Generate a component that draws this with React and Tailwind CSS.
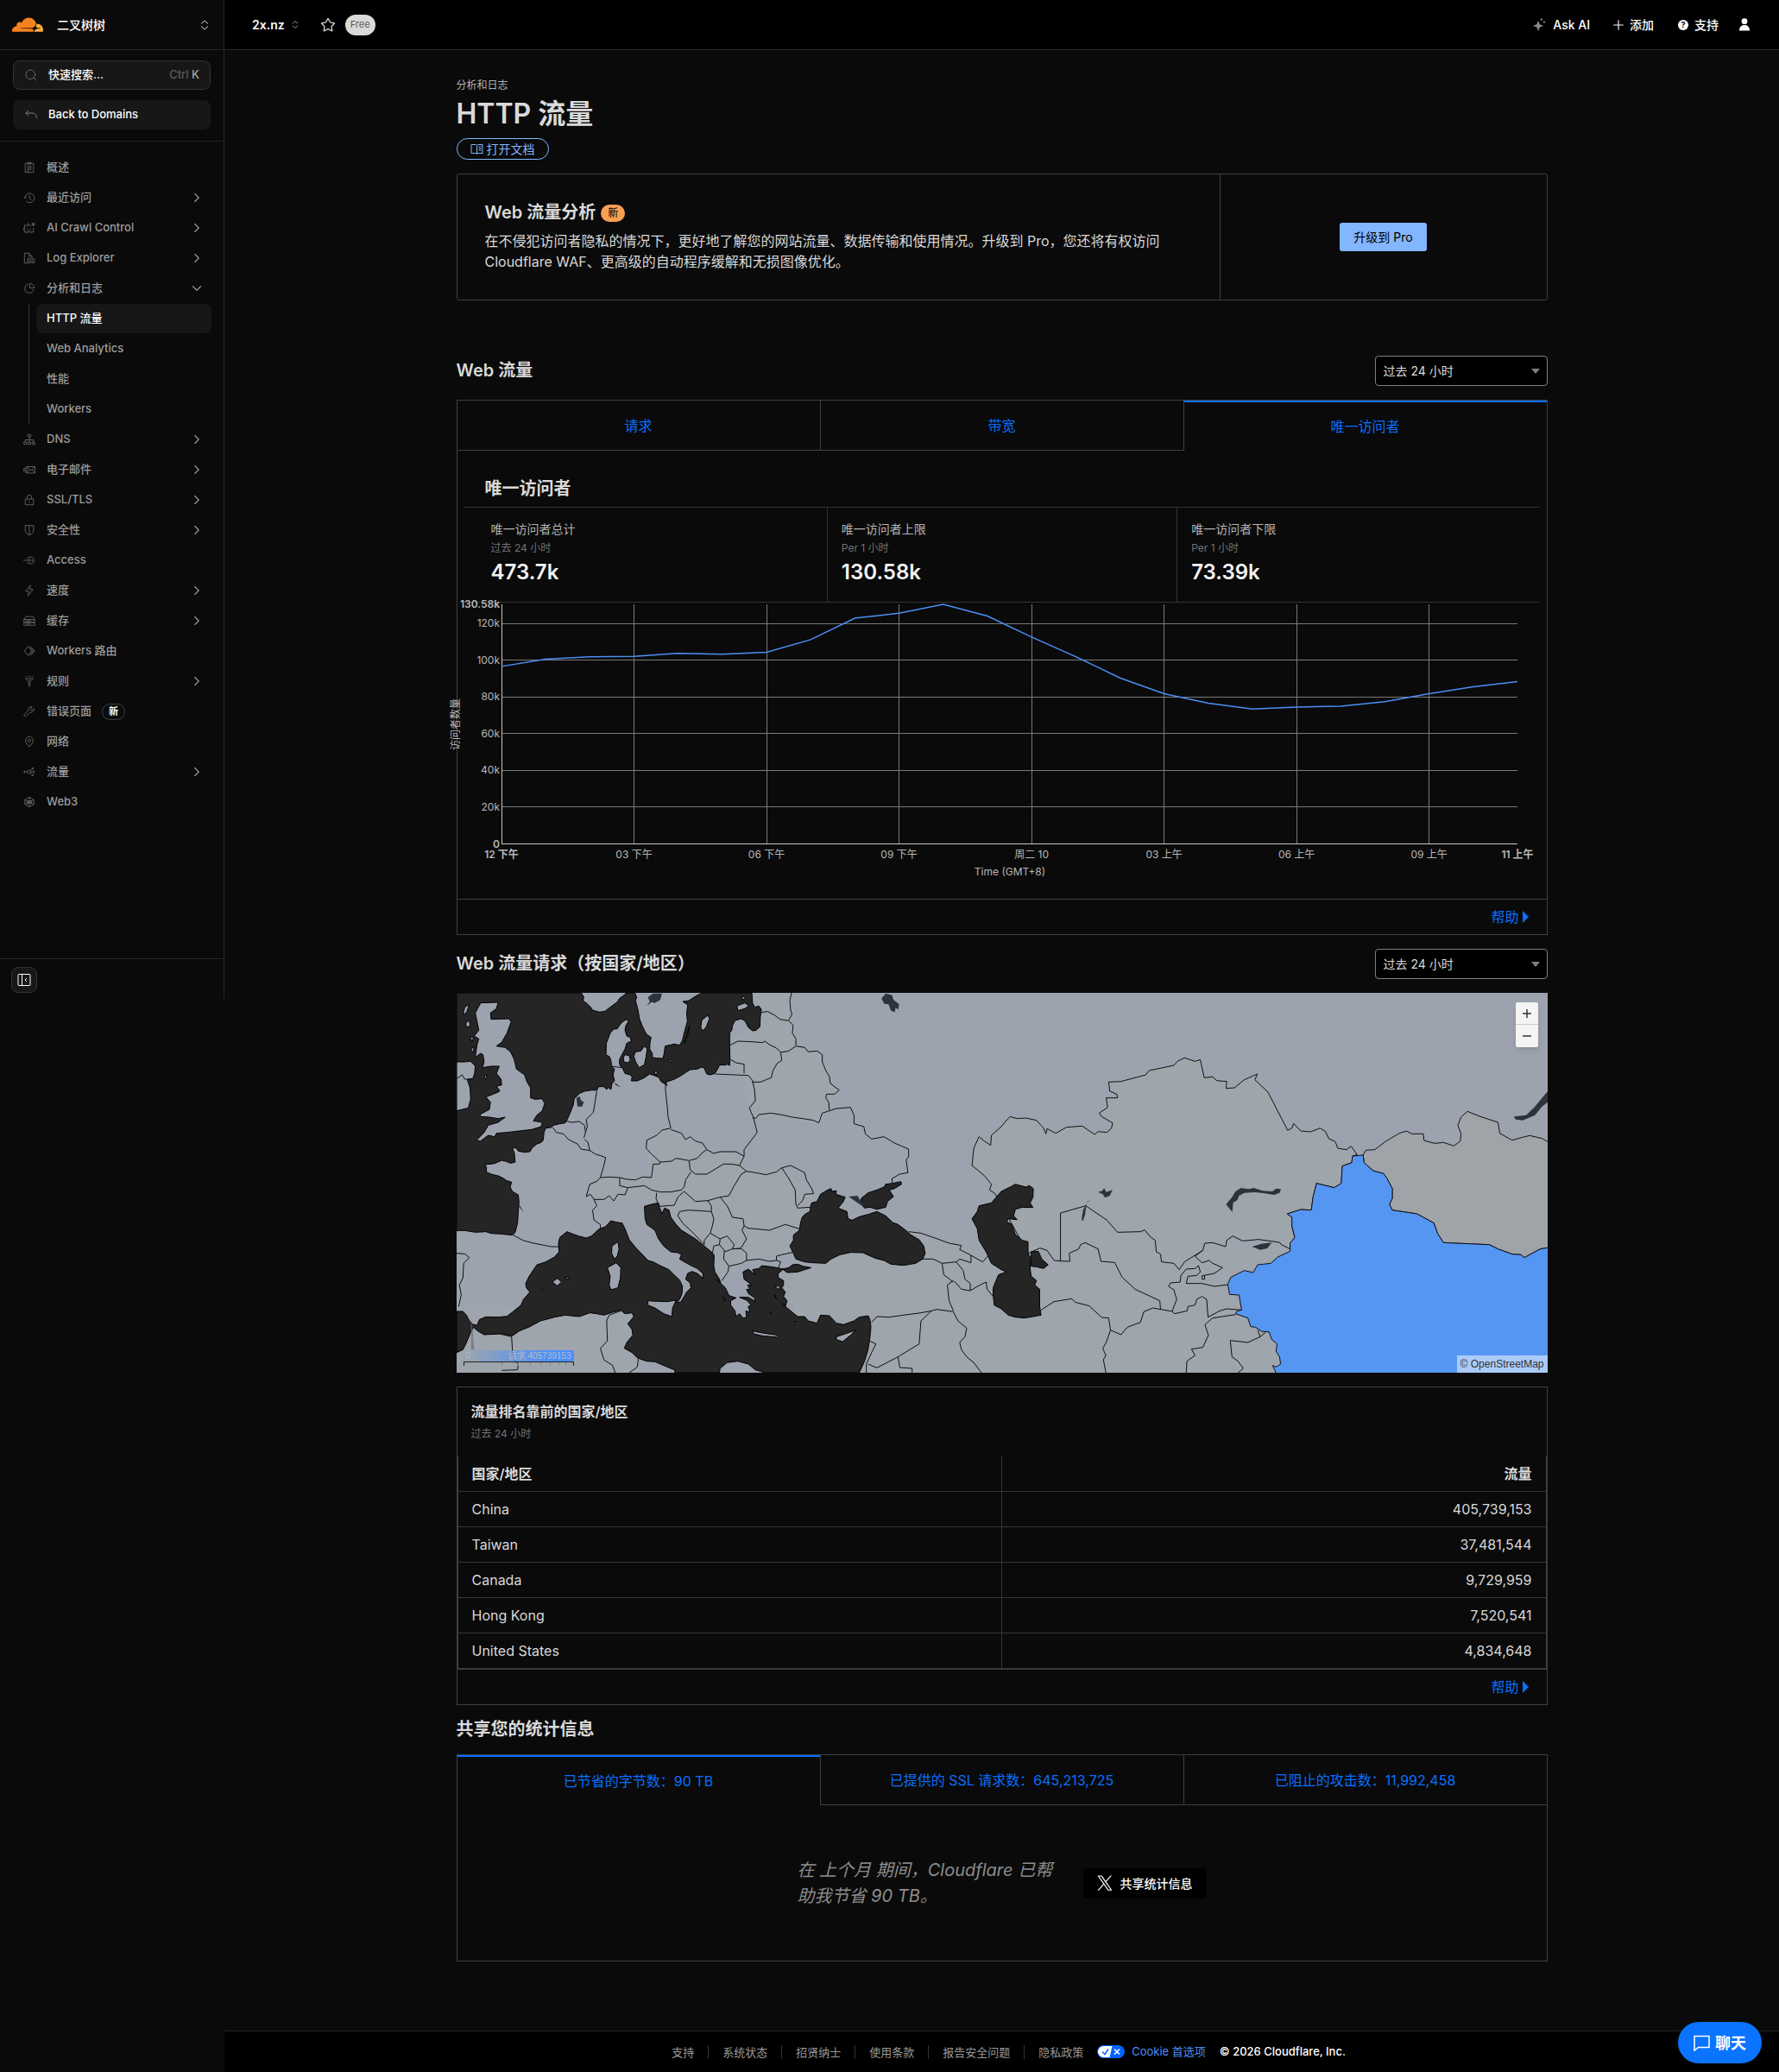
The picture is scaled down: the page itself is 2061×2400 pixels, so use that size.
import { useState } from 'react';
import { ChevronDown, ChevronRight, Plus, Search, Star } from 'lucide-react';

/* ---------- ICONS ---------- */

const ICONS = {
  overview: (
    <>
      <path d="M2.5 2.5h11v12h-11zM5.5 1.5h5v2h-5z" />
      <path d="M5 6.5h6M5 8.5h6M5 10.5h6M5 12.5h3" />
    </>
  ),
  recent: (
    <>
      <path d="M2.2 8.5a6.2 6.2 0 1 1 1.6 4M.8 7l1.4 1.8L4 7.2" />
      <path d="M8.2 4.5V9l2.6 1.6" />
    </>
  ),
  robot: (
    <>
      <path d="M10 4.5H1.5v9h12V8M4.5 13.5v1M10.5 13.5v1M6.5 4.5v-3M.5 8v3" />
      <path d="M5 7.5v1M9.5 7.5v1M5 10.5c1.2 1 3.6 1 4.8 0" />
      <path d="M13.2.8v5M10.8 3.3h4.8M11.6 1.6l3.2 3.4M14.8 1.6 11.6 5" />
    </>
  ),
  log: (
    <>
      <path d="M5 14.5H1.5v-13h6l4 4v2M7.5 1.5v4h4" />
      <path d="M5.5 10a1.8 1.8 0 0 1 3.4-1 1.8 1.8 0 0 1 3 0 1.8 1.8 0 0 1 3 1.6v2.9a1.2 1.2 0 0 1-2.4 0h-4a1.5 1.5 0 0 1-3 0z" />
      <path d="M7.5 9.5v4M10 9.5v4M12.5 9.5v4" />
    </>
  ),
  pie: (
    <>
      <path d="M6.8 2.6A5.8 5.8 0 1 0 13.6 9.5" />
      <path d="M8.5 1.5v6h6a6 6 0 0 0-6-6z" />
    </>
  ),
  dns: (
    <>
      <path d="M6 1.5h4v3H6zM.8 11.5h3.6v3H.8zM6.2 11.5h3.6v3H6.2zM11.6 11.5h3.6v3h-3.6z" />
      <path d="M8 4.5v7M2.6 11.5v-3h10.8v3" />
    </>
  ),
  mail: (
    <>
      <path d="M4.5 4h11v8.5h-11zM4.5 4l5.5 5 5.5-5M4.5 12.5 8.5 8M15.5 12.5 11.5 8" />
      <path d="M2.5 4.5V12M.8 6v4.5" />
    </>
  ),
  lock: (
    <>
      <path d="M2.5 7h11v7.5h-11zM5 7V4.5a3 3 0 0 1 6 0V7" />
      <path d="M8 9.8v2" />
    </>
  ),
  shield: <path d="M2.5 2h11v6c0 3.5-2.5 5.5-5.5 6.5C5 13.5 2.5 11.5 2.5 8zM8 2v12.5" />,
  access: (
    <>
      <path d="M4.5 5.6a5.5 4.5 0 1 1 0 5" />
      <path d="M0 8h9.5M7 5.8 9.8 8 7 10.2M11.5 6.5a2.2 2.2 0 0 1 0 3.2" />
    </>
  ),
  bolt: <path d="M9.5 1 3 9h4.5L6 15l7-8.5H8.500z" />,
  cache: (
    <>
      <path d="M.8 6.5 3 2.5h10l2.200 4zM.8 6.500h14.400v3.500H.8zM.8 10.500h14.400v3.500H.8z" />
      <path d="M3.500 8.500h6M3.500 12.500h6" />
    </>
  ),
  workers: (
    <>
      <path d="M6.5 2 1.5 8l5 6L11 8z" />
      <path d="M8.5 2 13 8l-4.5 6M10.8 3l4 5-4 5" />
    </>
  ),
  rules: (
    <>
      <path d="M3 4.5h10L9 8.8v4.7H7V8.8z" />
      <path d="M2.5 2H4M6 2h1.500M9 2h1.500M12 2h1.500M8 14.500V16M8 6v2" />
    </>
  ),
  wrench: (
    <path d="M14 4.2 11.600 6.500 9.700 6 9.300 4.200 11.600 2a4 4 0 0 0-5.200 4.800L1.500 11.500a1.700 1.700 0 0 0 0 2.500 1.700 1.700 0 0 0 2.500 0l5-4.800a4 4 0 0 0 5-5z" />
  ),
  pin: (
    <>
      <path d="M8 15C5 11.500 3 9 3 6.500a5 5 0 0 1 10 0C13 9 11 11.500 8 15z" />
      <circle cx="8" cy="6.500" r="1.800" />
    </>
  ),
  traffic: (
    <>
      <circle cx="7.500" cy="8" r="2.300" />
      <path d="M0 8h5.200M9.800 8H15M13 6.200 15.200 8 13 9.800M9.200 6.400 13 3M10.800 2.800H13V5M9.200 9.600 13 13M10.800 13.200H13V11M1.800 6.500v3" />
    </>
  ),
  web3: (
    <>
      <path d="M8 1.500 14 5v6l-6 3.500L2 11V5z" />
      <path d="M2 5l12 6M14 5 2 11M8 1.500v13M5 6.500h6v3.500H5z" />
    </>
  ),
};

function NavIcon({ name }) {
  return (
    <svg className="h-[14px] w-[14px] shrink-0 text-[#686868]" viewBox="0 0 16 16" fill="none" stroke="currentColor">
      {ICONS[name]}
    </svg>
  );
}

function UpDown({ className }) {
  return (
    <svg className={className} viewBox="0 0 10 12" fill="none" stroke="currentColor">
      <path d="M1 4.500 5 1l4 3.500M1 7.500 5 11l4-3.500" />
    </svg>
  );
}

function CloudflareLogo() {
  return (
    <svg className="h-[17px] w-9 shrink-0" viewBox="0 6.3 24 11.2">
      <path
        fill="#f6821f"
        d="M16.5088 16.8447c.1475-.5068.0908-.9707-.1553-1.3154-.2246-.3164-.6045-.499-1.0615-.5205l-8.6592-.1123a.1559.1559 0 0 1-.1333-.0713c-.0283-.042-.0351-.0986-.021-.1553.0278-.084.1123-.1484.2036-.1562l8.7359-.1123c1.0351-.0489 2.1601-.8868 2.5537-1.9136l.499-1.3013c.0215-.0561.0293-.1128.0147-.168-.5625-2.5463-2.835-4.4453-5.5499-4.4453-2.5039 0-4.6284 1.6177-5.3876 3.8614-.4927-.3658-1.1187-.5625-1.794-.499-1.2026.119-2.1665 1.083-2.2861 2.2856-.0283.31-.0069.6128.0635.894C1.5683 13.171 0 14.7754 0 16.752c0 .1748.0142.3515.0352.5273.0141.083.0844.1475.1689.1475h15.9814c.0909 0 .1758-.0645.2032-.1553l.12-.4268z"
      />
      <path
        fill="#fbad41"
        d="M19.2656 11.2813c-.0771 0-.1611 0-.2383.0112-.0566 0-.1054.0415-.127.0976l-.3378 1.1744c-.1475.5068-.0918.9707.1543 1.3164.2256.3164.6055.498 1.0625.5195l1.8437.1133c.0557 0 .1055.0263.1329.0703.0283.043.0351.1074.0214.1562-.0283.084-.1132.1485-.204.1553l-1.921.1123c-1.041.0488-2.1582.8867-2.5527 1.914l-.1406.3585c-.0283.0713.0215.1416.0986.1416h6.5977c.0771 0 .1474-.0489.169-.126.1122-.4082.1757-.837.1757-1.2803 0-2.6025-2.125-4.727-4.7344-4.727"
      />
    </svg>
  );
}

/* ---------- SIDEBAR ---------- */

const NAV = [
  { icon: 'overview', label: '概述' },
  { icon: 'recent', label: '最近访问', more: true },
  { icon: 'robot', label: 'AI Crawl Control', more: true },
  { icon: 'log', label: 'Log Explorer', more: true },
  { icon: 'pie', label: '分析和日志', open: true, children: ['HTTP 流量', 'Web Analytics', '性能', 'Workers'] },
  { icon: 'dns', label: 'DNS', more: true },
  { icon: 'mail', label: '电子邮件', more: true },
  { icon: 'lock', label: 'SSL/TLS', more: true },
  { icon: 'shield', label: '安全性', more: true },
  { icon: 'access', label: 'Access' },
  { icon: 'bolt', label: '速度', more: true },
  { icon: 'cache', label: '缓存', more: true },
  { icon: 'workers', label: 'Workers 路由' },
  { icon: 'rules', label: '规则', more: true },
  { icon: 'wrench', label: '错误页面', badge: '新' },
  { icon: 'pin', label: '网络' },
  { icon: 'traffic', label: '流量', more: true },
  { icon: 'web3', label: 'Web3' },
];

function Sidebar() {
  return (
    <aside className="flex h-[1157px] w-[260px] shrink-0 flex-col border-r border-[#262626] text-[13px] font-medium">
      <div className="flex h-[58px] shrink-0 items-center border-b border-[#262626] px-[14px]">
        <CloudflareLogo />
        <button type="button" className="ml-4 flex flex-1 items-center justify-between pr-[3px] text-[14px] text-white">
          二叉树树
          <UpDown className="h-3 w-[10px] text-[#d4d4d4]" />
        </button>
      </div>

      <div className="flex shrink-0 flex-col gap-3 border-b border-[#262626] px-[15px] pt-3 pb-[13px]">
        <button type="button" className="flex h-[34px] items-center rounded-lg border border-[#333] bg-[#171717] px-3 text-white">
          <Search className="mr-3 h-4 w-4 text-[#6b6b6b]" strokeWidth={1.5} />
          快速搜索...
          <span className="ml-auto text-[#5c5c5c]">
            Ctrl <span className="text-[#a3a3a3]">K</span>
          </span>
        </button>
        <a href="#domains" className="flex h-[34px] items-center rounded-lg bg-[#171717] px-[14px] text-white">
          <svg className="mr-[13px] h-[14px] w-[14px] text-[#808080]" viewBox="0 0 14 14" fill="none" stroke="currentColor">
            <path d="M4 2 .8 5 4 8M.8 5H8c3.500 0 5.500 2 5.500 6" />
          </svg>
          Back to Domains
        </a>
      </div>

      <nav className="flex flex-1 flex-col gap-px pt-[13px] pr-[14px] pl-[15px] text-[#9c9c9c]">
        {NAV.map((item) => (
          <div key={item.label} className="flex flex-col gap-px">
            <a href="#nav" className="flex h-[34px] items-center pr-2 pl-3">
              <NavIcon name={item.icon} />
              <span className="ml-[13px]">{item.label}</span>
              {item.badge && (
                <span className="ml-3 rounded-full border border-[#404040] px-[7px] text-[11px] leading-[17px] font-bold text-white">
                  {item.badge}
                </span>
              )}
              {item.more && <ChevronRight className="ml-auto h-[18px] w-[18px]" strokeWidth={1.5} />}
              {item.open && <ChevronDown className="ml-auto h-[18px] w-[18px]" strokeWidth={1.5} />}
            </a>
            {item.children && (
              <div className="ml-[18px] flex flex-col gap-px border-l border-[#333] pl-2">
                {item.children.map((child, i) => (
                  <a
                    key={child}
                    href="#nav"
                    className={`flex h-[34px] items-center rounded-lg px-3 ${i === 0 ? 'bg-[#171717] text-white' : ''}`}
                  >
                    {child}
                  </a>
                ))}
              </div>
            )}
          </div>
        ))}
      </nav>

      <div className="shrink-0 border-t border-[#262626] px-[13px] pt-[9px] pb-[7px]">
        <button
          type="button"
          aria-label="Collapse sidebar"
          className="flex h-[30px] w-[30px] items-center justify-center rounded-lg border border-[#333] bg-[#171717] text-white"
        >
          <svg className="h-4 w-4" viewBox="0 0 16 16" fill="none" stroke="currentColor">
            <rect x="1" y="1.5" width="14" height="13" rx="1" />
            <path d="M5.5 1.5v13M11 6 9 8l2 2" />
          </svg>
        </button>
      </div>
    </aside>
  );
}

/* ---------- TOP BAR ---------- */

function TopBar() {
  return (
    <header className="flex h-[58px] items-center border-b border-[#262626] bg-black pr-[34px] pl-8 text-[14px] font-medium text-white">
      <button type="button" className="flex items-center gap-2 font-semibold">
        2x.nz
        <UpDown className="h-[11px] w-[8px] text-[#b3b3b3]" />
      </button>
      <Star className="ml-[25px] h-[18px] w-[18px] text-[#d4d4d4]" strokeWidth={1.8} />
      <span className="ml-[11px] flex h-6 items-center rounded-full bg-[#d9d9d9] px-[6px] text-[11px] font-normal text-[#595959]">
        Free
      </span>

      <div className="ml-auto flex items-center">
        <button type="button" className="flex items-center gap-2">
          <svg className="h-[15px] w-[15px] text-[#8c8c8c]" viewBox="0 0 16 16" fill="currentColor">
            <path d="M6.5 3 8.3 7.700l4.700 1.800-4.700 1.800L6.500 16l-1.800-4.700L0 9.500l4.700-1.800z" />
            <circle cx="10.500" cy="1.700" r="1.300" />
            <circle cx="13.800" cy="4.800" r="1.200" />
          </svg>
          Ask AI
        </button>
        <button type="button" className="ml-6 flex items-center gap-1">
          <Plus className="h-[18px] w-[18px]" strokeWidth={1.5} />
          添加
        </button>
        <button type="button" className="ml-7 flex items-center gap-[7px]">
          <span className="flex h-3 w-3 items-center justify-center rounded-full bg-white text-[9px] leading-none font-bold text-black">
            ?
          </span>
          支持
        </button>
        <button type="button" aria-label="Account" className="ml-6">
          <svg className="h-[15px] w-3" viewBox="0 0 12 15" fill="currentColor">
            <circle cx="6" cy="3.700" r="3.400" />
            <path d="M0 14.500C0 10.500 2.200 8 6 8s6 2.500 6 6.500z" />
          </svg>
        </button>
      </div>
    </header>
  );
}

/* ---------- SHARED PARTS ---------- */

function RangeSelect({ label }) {
  return (
    <div className="relative w-[200px]">
      <select
        aria-label={label}
        className="block h-[35px] w-full appearance-none rounded-[4px] border border-[#808080] bg-black px-[9px] text-[14px] text-[#d9d9d9]"
      >
        <option>过去 24 小时</option>
      </select>
      <span className="pointer-events-none absolute top-[15px] right-[9px] border-x-5 border-t-6 border-x-transparent border-t-[#808080]" />
    </div>
  );
}

function SectionHead({ title, range }) {
  return (
    <div className="mt-4 flex items-center justify-between">
      <h2 className="text-[20px] leading-[25px] font-semibold">{title}</h2>
      {range && <RangeSelect label={title} />}
    </div>
  );
}

function Tabs({ items, initial }) {
  const [active, setActive] = useState(initial);
  return (
    <div role="tablist" className="grid h-[59px] grid-cols-3 border-t border-r border-[#404040]">
      {items.map((item, i) => (
        <button
          key={item}
          type="button"
          role="tab"
          aria-selected={i === active}
          onClick={() => setActive(i)}
          className={`border-l border-l-[#404040] text-[16px] text-[#086fff] ${
            i === active ? 'border-t-2 border-t-[#086fff]' : 'border-b border-b-[#404040]'
          }`}
        >
          {item}
        </button>
      ))}
    </div>
  );
}

function HelpLink() {
  return (
    <a href="#help" className="flex items-center gap-1 text-[16px] text-[#086fff]">
      帮助
      <span className="border-y-7 border-l-7 border-y-transparent border-l-[#086fff]" />
    </a>
  );
}

/* ---------- CHART ---------- */

const VISITORS = [
  96.7, 100.65, 102, 102.15, 103.85, 103.3, 104.4, 111.3, 123.05, 125.7, 130.58, 124.2,
  112.7, 102, 90.4, 81.8, 76.65, 73.39, 74.45, 74.95, 77.45, 81.8, 85.55, 88.4,
];
const X_LABELS = ['12 下午', '03 下午', '06 下午', '09 下午', '周二 10', '03 上午', '06 上午', '09 上午'];

const CHART = { left: 51, right: 1228, top: 2, bottom: 279, max: 130.58 };
const px = (i) => CHART.left + ((CHART.right - CHART.left) * i) / 23;
const py = (v) => CHART.bottom - ((CHART.bottom - CHART.top) * v) / CHART.max;

function VisitorsChart() {
  return (
    <svg className="block w-full overflow-visible text-[12px]" viewBox="0 0 1262 343" fill="#b8b8b8">
      <g stroke="#7a7a7a" shapeRendering="crispEdges">
        {[20, 40, 60, 80, 100, 120].map((v) => (
          <line key={v} x1={CHART.left} x2={CHART.right} y1={py(v)} y2={py(v)} />
        ))}
        {[3, 6, 9, 12, 15, 18, 21].map((i) => (
          <line key={i} x1={px(i)} x2={px(i)} y1={CHART.top} y2={CHART.bottom} />
        ))}
      </g>
      <path
        d={`M${CHART.left} ${CHART.top}V${CHART.bottom}H${CHART.right}`}
        fill="none"
        stroke="#c8c8c8"
        shapeRendering="crispEdges"
      />
      <polyline
        points={VISITORS.map((v, i) => `${px(i)},${py(v)}`).join(' ')}
        fill="none"
        stroke="#4b8ff5"
        strokeWidth="1.5"
      />
      <g textAnchor="end">
        {[20, 40, 60, 80, 100, 120].map((v) => (
          <text key={v} x="49" y={py(v) + 4}>{`${v}k`}</text>
        ))}
        <text x="49" y="6" fontWeight="600">130.58k</text>
        <text x="49" y="284" fontWeight="600">0</text>
      </g>
      <g textAnchor="middle">
        {X_LABELS.map((label, i) => (
          <text key={label} x={px(i * 3)} y="296" fontWeight={i === 0 ? 600 : 400}>{label}</text>
        ))}
        <text x={CHART.right} y="296" fontWeight="600">11 上午</text>
        <text x="640" y="316">Time (GMT+8)</text>
        <text transform="translate(2 141) rotate(-90)">访问者数量</text>
      </g>
    </svg>
  );
}

const STATS = [
  { label: '唯一访问者总计', sub: '过去 24 小时', value: '473.7k' },
  { label: '唯一访问者上限', sub: 'Per 1 小时', value: '130.58k' },
  { label: '唯一访问者下限', sub: 'Per 1 小时', value: '73.39k' },
];

/* ---------- MAP ---------- */

const SEAS = [
  // Atlantic, North Sea and Baltic
  'M22 60H376L383 75 381 88 390 95 405 113 407 120 428 127 443 124 460 108 478 92 484 80 500 66 503 60H528L533 75 530 88 537 120 541 150 549 175 557 195 562 205 574 215 571 232 570 255 578 272 577 284 590 287 608 288 611 270 614 245 640 238 655 242 663 225 670 190 677 160 675 130 678 102 664 90 680 88 700 72 718 60H860L862 95 868 110 880 106 887 118 884 145 883 178 872 190 862 192 850 180 841 158 830 150 812 156 805 175 803 190 797 200 797 245 798 290 797 312 790 308 785 311 768 311 763 325 755 340 742 345 732 342 725 322 718 318 705 325 685 327 672 337 660 347 640 360 615 371 620 382 602 368 597 355 585 348 570 342 555 355 535 366 518 366 520 352 515 345 500 340 493 322 487 315 484 305 485 290 490 278 500 255 505 235 518 228 515 215 505 210 500 190 502 175 509 160 509 152 500 155 492 162 485 172 478 185 468 186 458 200 452 220 447 235 446 275 456 282 460 295 462 315 470 325 466 345 470 365 463 375 460 396 452 388 448 396 440 386 425 386 420 398 405 398 385 402 370 410 356 428 353 450 345 475 336 500 330 512 315 515 298 520 290 528 275 530 270 545 268 572 262 580 250 585 237 598 230 612 215 614 197 610 192 600 180 597 186 618 188 648 175 652 163 646 150 642 130 653 103 657 107 668 106 682 120 690 143 697 155 705 163 712 178 718 174 735 180 750 197 762 199 785 197 820 195 860 188 893 180 902 150 898 120 896 105 890 75 892 45 886 22 886Z',
  // Mediterranean with the Adriatic and Aegean
  'M22 1167 40 1167 50 1180 58 1200 68 1212 80 1215 87 1195 105 1186 140 1187 165 1184 180 1170 205 1145 212 1125 230 1100 220 1085 218 1070 228 1045 250 1005 275 995 300 978 313 960 311 930 315 910 335 890 352 898 368 905 390 912 405 905 425 882 445 872 460 852 475 857 492 860 500 880 512 918 530 945 550 970 565 990 580 995 600 1008 625 1022 635 1035 655 1058 663 1080 662 1105 655 1125 648 1134 658 1135 668 1115 675 1100 687 1085 685 1068 672 1055 678 1035 690 1028 705 1035 715 1045 722 1052 721 1035 705 1018 680 1003 655 985 660 970 650 963 630 960 610 940 595 915 585 885 562 865 557 845 555 802 575 795 595 790 598 806 605 828 612 808 625 815 630 840 645 865 660 885 680 900 700 915 725 940 745 960 753 972 752 1010 755 1030 768 1055 772 1070 785 1085 795 1112 815 1120 800 1130 800 1145 812 1165 815 1185 825 1175 835 1190 845 1188 843 1165 855 1170 850 1150 858 1145 845 1128 825 1118 850 1118 870 1132 868 1120 850 1105 845 1090 855 1092 848 1075 860 1075 838 1055 835 1030 850 1020 870 1040 862 1022 880 1018 888 1008 905 1010 930 1015 950 1020 935 1035 935 1050 950 1060 950 1075 945 1085 955 1100 950 1115 960 1130 955 1150 975 1170 990 1185 1010 1185 1020 1200 1045 1208 1055 1180 1080 1182 1100 1208 1120 1213 1150 1200 1165 1187 1190 1182 1195 1195 1198 1220 1195 1260 1190 1300 1180 1340 1165 1380H897L870 1370 850 1350 820 1340 790 1345 770 1365 768 1380H642L640 1370 610 1355 585 1342 560 1340 535 1328 520 1310 498 1295 505 1275 522 1250 520 1230 508 1210 525 1185 520 1172 500 1175 488 1163 465 1170 440 1180 420 1175 400 1172 370 1185 330 1180 300 1187 260 1200 230 1220 200 1235 180 1252 145 1245 100 1248 82 1235 70 1222 60 1245 50 1275 40 1300 22 1310Z',
  // Black Sea, Azov, Marmara
  'M1010 830 1025 820 1027 800 1030 790 1045 785 1055 760 1075 745 1085 740 1087 750 1100 748 1098 760 1125 770 1120 785 1105 808 1130 820 1133 845 1145 850 1165 838 1190 830 1215 820 1240 835 1260 858 1275 865 1300 888 1310 900 1335 918 1348 940 1352 965 1345 985 1325 1000 1290 1007 1255 1003 1235 990 1210 982 1175 963 1140 962 1110 970 1085 985 1070 1000 1035 998 1010 995 985 985 978 965 968 940 978 920 978 902 995 885 998 860 1003 840Z',
  'M1170 775 1190 755 1215 745 1235 735 1240 725 1258 722 1283 716 1285 725 1265 740 1250 745 1262 768 1245 785 1240 805 1215 812 1195 805 1180 808 1168 790Z',
  'M948 1020 965 1015 975 1005 990 1003 1005 1010 1028 1015 1010 1022 990 1030 960 1032Z',
];

const CASPIAN = [
  'M1568 750 1540 790 1505 800 1500 820 1485 845 1500 880 1505 920 1525 960 1540 1000 1568 1022 1583 1030 1568 1036 1560 1040 1545 1085 1545 1110 1548 1145 1568 1158 1588 1180 1608 1187 1633 1190 1658 1185 1681 1180 1677 1150 1677 1090 1663 1075 1668 1060 1653 1045 1650 1020 1651 980 1644 965 1644 925 1628 920 1608 900 1598 865 1583 855 1588 845 1613 848 1603 835 1608 812 1628 805 1658 806 1650 790 1658 770 1659 740 1648 730 1638 735 1608 725 1593 735Z',
  'M1653 960 1673 958 1683 985 1701 1005 1688 1018 1668 1012 1653 1010Z',
];

const ISLANDS = [
  'M90 95 140 93 135 115 118 130 120 152 170 150 177 160 165 200 150 232 135 245 160 250 175 265 185 290 192 325 215 345 222 370 232 390 232 425 245 430 265 428 272 445 265 470 250 485 240 505 265 510 262 525 235 535 200 540 165 545 135 548 130 560 112 555 90 575 78 573 100 545 112 520 140 510 160 492 140 497 115 492 90 490 88 483 115 465 118 440 105 422 140 405 145 400 135 385 150 380 148 360 135 340 143 315 120 315 95 320 100 300 97 275 90 270 75 285 80 240 85 220 72 210 85 190 80 160 75 130Z',
  'M22 300 45 300 62 298 75 315 73 340 68 358 52 360 60 390 62 430 55 460 22 470Z',
  'M45 110 58 100 50 130 40 135ZM48 165 58 155 60 175 50 180ZM60 212 70 215 66 230ZM62 255 72 248 68 268ZM100 350 108 345 104 362Z',
  'M500 275 512 278 515 295 508 303 497 300 495 285Z',
  'M530 265 545 262 555 245 563 255 560 280 555 310 540 320 530 300 525 280Z',
  'M718 155 735 138 740 150 730 180 720 192 715 180ZM683 175 675 210 668 235 678 205ZM623 295 630 292 634 303ZM582 330 592 335 588 348Z',
  'M818 105 840 95 852 105 840 115 820 122ZM830 72 842 75 835 85Z',
  'M463 940 480 925 483 950 478 975 470 985 462 965Z',
  'M450 1015 475 998 488 1015 487 1050 480 1085 460 1092 455 1075 458 1045Z',
  'M565 1130 590 1132 620 1133 645 1128 635 1155 633 1185 610 1175 585 1155 565 1145Z',
  'M293 1065 308 1052 320 1065 308 1078ZM330 1048 342 1050 335 1056ZM262 1090 270 1088 266 1097Z',
  'M862 1235 890 1242 935 1250 930 1256 890 1252 865 1245Z',
  'M1100 1255 1125 1245 1155 1232 1140 1250 1118 1272 1100 1265Z',
  'M975 1210 985 1200 978 1215ZM925 1078 942 1080 935 1090ZM925 1110 930 1125ZM778 1115 785 1130ZM760 1055 770 1070ZM912 1168 914 1177ZM948 1142 956 1145Z',
];

const LAKES = [
  'M565 75 580 62 605 62 600 85 585 95 575 92 562 105 570 90Z',
  'M1228 80 1240 62 1258 68 1262 84 1278 100 1276 118 1268 112 1266 127 1255 122 1248 100 1236 98Z',
  'M362 425 372 420 374 432 383 440 378 455 365 455Z',
  'M1135 768 1160 765 1178 805 1160 790Z',
  'M197 790 212 822 200 805ZM468 370 488 388 475 382Z',
  'M2206 795 2223 770 2233 750 2248 738 2270 742 2285 738 2310 748 2338 750 2348 740 2362 742 2358 755 2343 762 2308 755 2288 753 2258 755 2243 765 2238 780 2226 790 2224 822Z',
  'M2280 942 2306 932 2336 928 2323 948 2303 953Z',
  'M1813 785 1824 778 1810 790 1806 830 1800 852 1796 850 1800 815Z',
  'M1843 752 1855 748 1860 738 1866 752 1884 745 1876 765 1863 772 1856 760Z',
  'M3023 490 3058 485 3083 455 3103 425 3119 403 3119 440 3103 455 3083 485 3048 503 3028 500Z',
];

const BORDERS = [
  'M973 60 968 85 970 120 974 135 965 155M887 128 905 125 925 138 940 152 965 157 977 172 975 200 985 220 985 242',
  'M797 243 820 228 860 230 890 233 897 228 910 240 930 252 942 267 965 262 985 245',
  'M985 245 1010 250 1020 265 1045 262 1060 275 1060 300 1070 330 1080 350 1083 375 1108 398 1095 412 1072 412 1070 425 1078 440 1080 468',
  'M1080 470 1060 478 1050 512 1035 503 1010 498 975 492 950 485 915 478 880 483 872 495 862 495',
  'M942 267 945 295 932 305 920 330 915 355 900 362 885 370 860 370M800 292 815 303 838 308 838 340',
  'M755 342 850 347 862 365 868 400 870 435 853 460 865 495 875 545 860 570 838 605 838 628',
  'M615 375 615 400 620 455 622 490 630 530 605 537 590 555 562 572 560 600 575 620 600 648 632 645 645 635 682 643 705 635 720 615 732 605',
  'M630 535 660 548 672 570 685 560 700 575 720 582 732 605 752 618 770 612 815 612 838 628',
  'M682 645 685 675 700 690 732 690 750 677 780 655 802 655 825 660 838 628',
  'M600 648 598 655 580 655 575 702 550 700 530 710 505 708 485 702 485 730 508 737 555 730 575 745 600 752 630 752 660 745 668 735 672 710 687 683',
  'M485 702 455 700 430 702 420 715 400 725 390 768 402 760 412 778 440 778 455 765 468 783 480 760 500 762 508 737',
  'M430 702 440 660 445 632 415 620 400 608M295 528 305 545 325 550 340 570 365 585 375 603 400 608 395 580 385 570',
  'M330 505 350 510 370 507 385 520 388 545 383 565M420 400 415 440 410 475 390 500 393 525 388 545M462 315 490 320',
  'M412 778 420 800 408 815 412 850 430 865 430 880M183 902 210 920 240 930 270 937 290 942 313 942',
  'M22 965 45 967 58 980 42 1000 40 1050 30 1075 35 1110 28 1150',
  'M590 755 588 775 598 802 640 798 650 770 668 750 700 785 735 782 770 770 795 765 810 730 830 690 845 680 825 660',
  'M845 680 870 685 900 692 930 682 945 668 970 660 990 672 1010 685 1015 710 1030 740 1035 758 1010 760 1005 780 990 800',
  'M945 668 965 705 983 745 985 795 990 808 1025 805M770 770 790 800 805 840 835 845 838 870 850 878 910 885 955 865 995 880',
  'M735 782 745 800 745 820 720 818 680 815 655 820 650 835 665 862 690 890 725 935M745 820 752 845 748 870 742 895 725 920 725 935',
  'M838 870 832 885 845 915 830 945M742 895 770 915 790 905 810 935 805 950 830 948M770 915 768 935 782 955M748 965 752 940 768 935',
  'M782 955 780 985 795 1010 792 1030 775 1060M782 960 805 950 830 948 845 965 845 990 830 1000 795 1010',
  'M845 990 880 985 910 993 930 990 930 975 945 970 975 962M930 990 942 995 935 1015',
  'M1080 470 1100 462 1140 458 1150 485 1150 515 1178 525 1182 550 1200 568 1235 560 1265 582 1305 603 1305 630 1298 640 1303 685 1280 690 1258 705 1258 720',
  'M1305 890 1340 895 1380 912 1420 930 1455 938 1450 952 1482 972 1515 995 1532 972M1345 985 1375 985 1400 1000 1440 995 1450 985 1482 998 1482 972',
  'M1400 1000 1405 1040 1432 1065M1440 995 1460 1025 1465 1055 1480 1070 1480 1095 1455 1090 1435 1062M1432 1060 1415 1075 1420 1130 1432 1165',
  'M1480 1095 1500 1080 1525 1065 1528 1090 1545 1115M1200 1205 1215 1185 1250 1187 1290 1180 1340 1172 1370 1165 1385 1160 1432 1168',
  'M1370 1165 1340 1200 1335 1280 1275 1325 1215 1363 1190 1350M1432 1168 1445 1200 1470 1225 1465 1255 1450 1275 1455 1300 1470 1325 1490 1345 1512 1380',
  'M1275 1325 1280 1362 1315 1365 1315 1380M1195 1270 1212 1280 1200 1310 1185 1350 1185 1380M22 358 38 345 45 360 60 362',
  'M145 1245 178 1255 182 1330 197 1350 195 1370 150 1372M488 1165 455 1180 448 1200 450 1270 430 1295 440 1335 465 1355 472 1380M538 1330 535 1360 512 1380',
];

const ASIA_BORDERS = [
  'M168 992 195 993 193 965 220 950 225 935 238 928 275 950 283 993 322 997 343 1048 380 1090 450 1130 452 1158',
  'M113 1162 150 1133 200 1123 210 1135 250 1148 285 1188 305 1190 310 1232 340 1248 358 1222 395 1205 405 1168 430 1155 485 1167',
  'M310 1232 298 1275 288 1295 297 1320 290 1335 297 1380',
  'M485 1167 498 1125 490 1092 475 1080 480 1068 508 1065 510 1042 525 1020 550 1018 560 1008 565 1030 555 1042 530 1045 525 1070 570 1070 605 1080 643 1074',
  'M572 955 550 975 570 998 590 990 600 1000 628 1015 605 1035 575 1042M570 1043 577 1043 577 1055 570 1055Z',
  'M485 1167 492 1175 528 1165 530 1150 550 1145 555 1125 570 1115 583 1125 587 1187 620 1165 640 1158 682 1162',
  'M665 1178 600 1190 578 1213 588 1250 572 1292 540 1298 550 1320 527 1340 525 1380',
  'M728 1232 735 1255 700 1275 650 1268 655 1325 672 1340 687 1365 672 1380M735 1255 750 1240',
];

const KAZAKHSTAN =
  'M-18 757-33 745-28 725-48 695-83 660-78 600-63 560-48 575-30 590-28 555 0 525 10 510 25 490 45 497 70 495 100 503 120 530 127 550 130 532 155 548 185 527 230 523 265 552 275 542 300 545 313 530 316 512 285 490 278 478 302 458 298 425 330 425 328 412 308 402 305 370 340 368 410 345 420 330 490 312 500 298 520 286 550 298 565 292 576 355 600 352 612 365 640 368 638 392 662 390 690 362 727 342 720 362 757 405 813 538 825 530 830 514 850 540 878 543 905 530 920 542 930 567 948 577 955 600 980 605 993 593 1010 622 997 627 995 650 968 662 965 722 945 737 895 722 885 770 880 815 850 813 812 828 825 840 825 870 833 910 820 930 820 950 795 935 790 927 730 917 685 922 657 905 640 920 637 942 600 928 578 930 572 955 520 995 505 1022 490 1000 455 995 452 968 440 960 437 920 425 910 407 884 395 890 330 892 300 850 240 800 168 825 168 992 150 990 130 955 110 947 76 965Z';

const MONGOLIA =
  'M1027 624 1035 607 1060 605 1090 577 1130 548 1150 540 1165 550 1198 550 1200 573 1230 583 1255 580 1285 592 1303 575 1305 550 1296 520 1305 492 1323 472 1360 490 1410 510 1415 548 1450 572 1480 562 1500 556 1535 566 1555 580V945L1530 950 1485 980 1475 970 1450 968 1410 950 1385 935 1290 930 1255 928 1238 895 1228 860 1180 828 1110 815 1102 795 1110 775 1110 740 1095 705 1085 688 1055 678 1030 650Z';

const CHINA =
  'M997 627 1027 624 1030 650 1055 678 1085 688 1095 705 1110 740 1110 775 1102 795 1110 815 1180 828 1228 860 1238 895 1255 928 1290 930 1385 935 1410 950 1450 968 1475 970 1485 980 1530 950 1555 945V1385H782L770 1355 780 1360 793 1350 790 1325 780 1305 783 1280 768 1265 760 1238 740 1237 722 1222 708 1220 700 1190 665 1175 668 1167 682 1162 675 1110 648 1108 643 1072 652 1048 690 1025 715 1032 728 1005 765 1000 785 978 820 958 820 930 833 910 825 870 825 840 812 828 850 813 880 815 885 770 895 722 945 737 965 722 968 662 995 650Z';

// Slightly greyer tint shared by the countries with fewer requests
const PALE_LAND = [
  'M1644 965 1736 992V825L1808 800 2005 920 2073 1022 2146 920 2388 940 2353 978 2258 1025 2211 1072 2250 1162 2268 1190 2328 1238 2361 1350 2350 1385H1008L1198 1380 1168 1200 1432 1168 1420 1100 1345 985 1305 890 1455 938 1532 972 1568 1022Z',
  'M22 1150H540V1380H22ZM860 60H973L985 245 1060 275 1108 398 1080 470 1050 512 862 495 797 243 887 128Z',
  'M560 570 630 530 732 605 838 628 845 680 945 668 1035 758 995 880 975 962 845 990 775 1060 725 935 590 790 390 768 430 702 575 702Z',
  'M935 1035 1010 995 1140 962 1345 985 1432 1065 1432 1168 1200 1205 990 1185Z',
];

function CountryMap() {
  return (
    <div className="relative mt-4 h-[440px] overflow-hidden bg-[#9ca3af]">
      <svg className="block h-full w-full" viewBox="22 60 3097 1320" preserveAspectRatio="none">
        <g fill="#9ea5ac">
          {PALE_LAND.map((d) => <path key={d} d={d} />)}
        </g>
        <g fill="#252525" stroke="#000">
          {SEAS.map((d) => <path key={d} d={d} vectorEffect="non-scaling-stroke" />)}
        </g>
        <g fill="#9ca3af" stroke="#000">
          {ISLANDS.map((d) => <path key={d} d={d} vectorEffect="non-scaling-stroke" />)}
        </g>
        <g fill="none" stroke="#111">
          {BORDERS.map((d) => <path key={d} d={d} vectorEffect="non-scaling-stroke" />)}
        </g>
        <g transform="translate(1568 0)" fill="none" stroke="#111">
          <path d={KAZAKHSTAN} fill="#9ea6ab" vectorEffect="non-scaling-stroke" />
          <path d={MONGOLIA} fill="#a0a4a9" vectorEffect="non-scaling-stroke" />
          <path d={CHINA} fill="#5596f3" vectorEffect="non-scaling-stroke" />
          {ASIA_BORDERS.map((d) => <path key={d} d={d} vectorEffect="non-scaling-stroke" />)}
        </g>
        {/* The Caspian sits over the Kazakh coast */}
        <g fill="#252525" stroke="#000">
          {CASPIAN.map((d) => <path key={d} d={d} vectorEffect="non-scaling-stroke" />)}
        </g>
        <g fill="#2d333d">
          {LAKES.map((d) => <path key={d} d={d} />)}
        </g>
        <path d="M63 1180 68 1240 72 1300H63Z" fill="#6b7280" opacity="0.7" />
      </svg>

      <div className="absolute bottom-2 left-2 w-[128px] font-['Liberation_Sans','Noto_Sans_CJK_SC',sans-serif] text-[10px] leading-[13px] text-[#b4bac4]">
        <div className="flex justify-between rounded-[2px] bg-linear-to-r from-transparent to-[#4a90ff] to-80% px-[3px]">
          <span>0</span>
          <span>请求 405739153</span>
        </div>
        <svg className="block h-[5px] w-full" viewBox="0 0 128 5" fill="none" stroke="#222">
          <path d="M0 .5H128M.5 0V5M127.5 0V5" />
          <path d="M44.5 1V5M63.5 1V5M77.5 1V5M89.5 1V5M100.5 1V5M110.5 1V5M118.5 1V5" stroke="#888" />
        </svg>
      </div>

      <div className="absolute top-[11px] right-[11px] flex w-[26px] flex-col rounded-[2px] bg-[#f4f4f4] text-[#333] shadow-md">
        <button type="button" aria-label="Zoom in" className="flex h-[26px] items-center justify-center border-b border-[#ccc]">
          <svg className="h-[10px] w-[10px]" viewBox="0 0 10 10" stroke="currentColor" strokeWidth="1.5">
            <path d="M0 5h10M5 0v10" />
          </svg>
        </button>
        <button type="button" aria-label="Zoom out" className="flex h-[26px] items-center justify-center">
          <svg className="h-[10px] w-[10px]" viewBox="0 0 10 10" stroke="currentColor" strokeWidth="1.5">
            <path d="M0 5h10" />
          </svg>
        </button>
      </div>

      <a
        href="#osm"
        className="absolute right-0 bottom-0 bg-white/50 px-1 font-['Liberation_Sans',Arial,sans-serif] text-[12px] leading-5 text-[#333]"
      >
        © OpenStreetMap
      </a>
    </div>
  );
}

/* ---------- TABLE ---------- */

const COUNTRIES = [
  ['China', '405,739,153'],
  ['Taiwan', '37,481,544'],
  ['Canada', '9,729,959'],
  ['Hong Kong', '7,520,541'],
  ['United States', '4,834,648'],
];

function CountryTable() {
  return (
    <section className="mt-4 border border-[#404040]">
      <div className="px-4 pt-4 pb-3">
        <h3 className="text-[16px] leading-6 font-semibold">流量排名靠前的国家/地区</h3>
        <p className="text-[12px] leading-7 text-[#737373]">过去 24 小时</p>
      </div>
      <table className="w-full table-fixed border-separate border-spacing-0 border-x border-[#404040] text-[16px] leading-6">
        <thead>
          <tr>
            <th className="h-[41px] border-r border-b border-[#363636] px-4 text-left font-semibold">国家/地区</th>
            <th className="h-[41px] border-b border-[#363636] px-4 text-right font-semibold">流量</th>
          </tr>
        </thead>
        <tbody>
          {COUNTRIES.map(([country, requests]) => (
            <tr key={country}>
              <td className="h-[41px] border-r border-b border-[#363636] px-4">{country}</td>
              <td className="h-[41px] border-b border-[#363636] px-4 text-right">{requests}</td>
            </tr>
          ))}
        </tbody>
      </table>
      <div className="flex h-[41px] items-center justify-end border-t border-[#404040] pr-[21px]">
        <HelpLink />
      </div>
    </section>
  );
}

/* ---------- FOOTER ---------- */

const FOOTER_LINKS = ['支持', '系统状态', '招贤纳士', '使用条款', '报告安全问题', '隐私政策'];

function Footer() {
  return (
    <footer className="flex h-[48px] items-center justify-center border-t border-[#262626] bg-black text-[13px] text-[#999]">
      {FOOTER_LINKS.map((link, i) => (
        <a key={link} href="#footer" className={`px-4 leading-4 ${i > 0 ? 'border-l border-[#333]' : ''}`}>
          {link}
        </a>
      ))}
      <button type="button" className="flex items-center gap-2 text-[#4b8ff5]">
        <svg className="h-[15px] w-8" viewBox="0 0 32 15" fill="none" strokeWidth="1.5">
          <rect width="32" height="15" rx="7.5" fill="#0066ff" />
          <path d="M7.5 1H17.5L14.5 14H7.500a6.500 6.500 0 0 1 0-13z" fill="#fff" />
          <path d="M6 7.500 9 10.500 13 4.500" stroke="#0066ff" />
          <path d="m20 4.500 6 6M26 4.500l-6 6" stroke="#fff" />
        </svg>
        Cookie 首选项
      </button>
      <span className="ml-4 font-medium text-white">© 2026 Cloudflare, Inc.</span>
    </footer>
  );
}

/* ---------- PAGE ---------- */

export default function App() {
  return (
    <div
      lang="zh-CN"
      className="flex min-h-screen bg-[#0a0a0a] font-['Inter','Noto_Sans_CJK_SC',sans-serif] text-[#d9d9d9]"
    >
      <Sidebar />
      <div className="flex min-w-0 flex-1 flex-col">
        <TopBar />

        <main className="mx-auto w-full max-w-[1264px] flex-1 pt-7">
          <p className="text-[12px] leading-[26px] text-[#b3b3b3]">分析和日志</p>
          <h1 className="text-[32px] leading-10 font-semibold">HTTP 流量</h1>
          <a
            href="#docs"
            className="mt-2 inline-flex h-[25px] items-center gap-1 rounded-full border border-[#82b6ff] px-[15px] align-top text-[14px] text-[#82b6ff]"
          >
            <svg className="h-[14px] w-[15px]" viewBox="0 0 15 14" fill="none" stroke="currentColor">
              <path d="M1 1.5h5.5l1 1 1-1H14v10H8.5l-1 1-1-1H1zM7.5 2.5v10M9.5 4h3M9.5 6h3M9.5 8h3" />
            </svg>
            打开文档
          </a>

          <section className="mt-4 flex rounded-[3px] border border-[#404040]">
            <div className="flex-1 p-8">
              <h2 className="flex items-center gap-[6px] text-[20px] leading-[25px] font-semibold">
                Web 流量分析
                <span className="rounded-full bg-[#f89f52] px-2 text-[12px] leading-5 font-normal text-black">新</span>
              </h2>
              <p className="mt-2 max-w-[790px] text-[16px] leading-6">
                在不侵犯访问者隐私的情况下，更好地了解您的网站流量、数据传输和使用情况。升级到 Pro，您还将有权访问 Cloudflare
                WAF、更高级的自动程序缓解和无损图像优化。
              </p>
            </div>
            <div className="flex w-[379px] items-center justify-center border-l border-[#404040]">
              <button type="button" className="h-[33px] rounded-[3px] bg-[#82b6ff] px-4 text-[14px] text-black">
                升级到 Pro
              </button>
            </div>
          </section>

          <div className="mt-16">
            <SectionHead title="Web 流量" range />
          </div>
          <section className="mt-4">
            <Tabs items={['请求', '带宽', '唯一访问者']} initial={2} />
            <div className="border-x border-b border-[#404040]">
              <h3 className="mb-[6px] pt-[29px] pl-8 text-[20px] leading-[30px] font-semibold">唯一访问者</h3>
              <dl className="mx-2 grid grid-cols-3 border-y border-[#333] px-[15px]">
                {STATS.map((stat, i) => (
                  <div key={stat.label} className={`px-4 pt-[15px] pb-[19px] ${i > 0 ? 'border-l border-[#333]' : ''}`}>
                    <dt className="text-[14px] leading-[19px] text-[#b3b3b3]">{stat.label}</dt>
                    <dd className="text-[12px] leading-[25px] text-[#737373]">{stat.sub}</dd>
                    <dd className="text-[24px] leading-[31px] font-semibold text-[#f2f2f2]">{stat.value}</dd>
                  </div>
                ))}
              </dl>
              <VisitorsChart />
              <div className="flex h-[41px] items-center justify-end border-t border-[#404040] pr-[21px]">
                <HelpLink />
              </div>
            </div>
          </section>

          <SectionHead title="Web 流量请求（按国家/地区）" range />
          <CountryMap />
          <CountryTable />

          <SectionHead title="共享您的统计信息" />
          <section className="mt-4">
            <Tabs
              items={['已节省的字节数：90 TB', '已提供的 SSL 请求数：645,213,725', '已阻止的攻击数：11,992,458']}
              initial={0}
            />
            <div className="flex items-center justify-center gap-7 border-x border-b border-[#404040] py-[60px]">
              <p className="w-[303px] text-[20px] leading-[30px] text-[#8c8c8c] italic">
                在 上个月 期间，Cloudflare 已帮助我节省 90 TB。
              </p>
              <button
                type="button"
                className="flex h-[35px] items-center gap-[9px] rounded-[5px] bg-black px-4 text-[14px] font-medium text-white"
              >
                <svg className="h-[18px] w-[18px]" viewBox="0 0 24 24" fill="currentColor">
                  <path d="M14.2 10.2 22.7.5h-2l-7.4 8.4L7.4.5H.6l8.9 12.8L.6 23.5h2l7.8-8.9 6.2 8.9h6.8zm-2.8 3.1-.9-1.300L3.300 2h3.100l5.800 8.200.9 1.300 7.600 10.700h-3.100z" />
                </svg>
                共享统计信息
              </button>
            </div>
          </section>
        </main>

        <Footer />
      </div>

      <button
        type="button"
        className="fixed right-5 bottom-[10px] flex h-12 items-center gap-[6px] rounded-full bg-[#0a73ff] px-[18px] text-[18px] font-bold text-white"
      >
        <svg className="h-[19px] w-[19px]" viewBox="0 0 19 19" fill="none" stroke="currentColor" strokeWidth="1.5">
          <path d="M1 1.5h17v13H5.5L1 18z" />
        </svg>
        聊天
      </button>
    </div>
  );
}
